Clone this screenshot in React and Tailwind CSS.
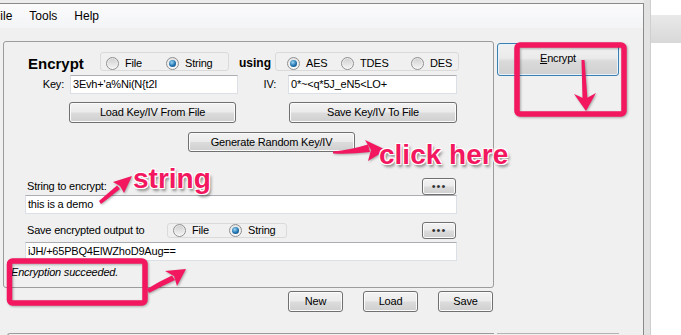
const btn =
  "flex items-center justify-center rounded-[3px] border border-[#707070] bg-[linear-gradient(180deg,#f3f3f3_0%,#ebebeb_48%,#dcdcdc_52%,#cfcfcf_100%)] shadow-[inset_0_0_0_1px_#fbfbfb] text-[11px] tracking-[-0.2px]";

const field =
  "flex items-center h-[19px] bg-white border border-[#dbdfe6] border-t-[#abadb3] pl-[2px] text-[11px] tracking-[-0.2px] whitespace-nowrap overflow-hidden";

const Radio = ({ label, checked, className = "" }) => (
  <span className={`flex items-center ${className}`}>
    <span className="flex items-center justify-center w-[13px] h-[13px] rounded-full border border-[#8e8f8f] bg-[linear-gradient(180deg,#e4e4e4,#fafafa)] shrink-0">
      {checked ? (
        <span className="w-[7px] h-[7px] rounded-full bg-[radial-gradient(circle_at_40%_35%,#9bd6f7,#1f72ad_55%,#0e4470)]" />
      ) : (
        <span className="w-[9px] h-[9px] rounded-full bg-[linear-gradient(180deg,#d2d2d2,#f2f2f2)]" />
      )}
    </span>
    <span className="ml-[6px] text-[11px] tracking-[-0.2px]">{label}</span>
  </span>
);

const Dots = () => (
  <div className={`${btn} w-[34px] h-[17px] text-[7px] tracking-[1px] pb-[1px] text-[#333]`}>•••</div>
);

const Label = ({ children, className = "" }) => (
  <span className={`text-[11px] tracking-[-0.2px] whitespace-nowrap ${className}`}>{children}</span>
);

const pink = "#f2175f";
const note =
  "absolute text-[28px] leading-[28px] font-bold text-[#f2175f] whitespace-nowrap [text-shadow:-1px_-1px_0_#fff,1px_-1px_0_#fff,-1px_1px_0_#fff,1px_1px_0_#fff,0_-1px_0_#fff,0_1px_0_#fff,2px_3px_3px_rgba(0,0,0,0.45)]";

const Annotations = () => (
  <>
    <svg
      className="absolute inset-0 pointer-events-none drop-shadow-[1px_1px_1px_rgba(0,0,0,0.3)]"
      width="681"
      height="335"
      viewBox="0 0 681 335"
    >
      <g fill="none" stroke={pink} strokeWidth="5.5" strokeLinejoin="round">
        <rect x="517" y="45" width="107" height="69" rx="3" />
        <rect x="9.5" y="261" width="135.5" height="42" rx="3" />
      </g>
      <g fill={pink}>
        {/* encrypt button arrow */}
        <polygon points="581.5,60 584.5,60 587.5,99 582.5,99" />
        <polygon points="574,94 585,99 596,93 586,111" />
        {/* click here arrow */}
        <path d="M333,151.5 Q350,150 368,144.5 L370,152 Q350,154.5 333,153.5 Z" />
        <path d="M365,140 L386,150 L368,161 L371,150 Z" />
        {/* status box arrow */}
        <path d="M147,289 L149,293 Q162,286 175,280 L172,275.5 Q158,282 147,289 Z" />
        <path d="M165,271 L186,269 L177,286 L174,276 Z" />
        {/* string arrow */}
        <path d="M99,201 L101,204 Q110,197 120,189 L117,185.5 Q107,194 99,201 Z" />
        <path d="M113,182 L132,176 L124,193 L120,186 Z" />
      </g>
    </svg>
    <span className={note} style={{ left: 379, top: 141 }}>click here</span>
    <span className={note} style={{ left: 133, top: 165 }}>string</span>
  </>
);

export default function App() {
  return (
    <div className="relative w-[681px] h-[335px] overflow-hidden bg-white flex text-black font-['Liberation_Sans',Arial,sans-serif]">
      {/* window */}
      <div className="w-[644px] h-full flex flex-col">
        <div className="h-[3px] bg-[#ececec] shrink-0" />
        <div className="flex-1 flex flex-col border-t border-r border-[#8a8a8a] overflow-hidden">
          {/* menu bar */}
          <div className="h-[24px] shrink-0 flex items-center gap-[17px] bg-[linear-gradient(180deg,#fbfbfc,#f3f4f6)] text-[12px]">
            <span className="ml-[-7px]">File</span>
            <span>Tools</span>
            <span>Help</span>
          </div>

          <div className="flex-1 bg-[#f0f0f0] pl-[3px] pt-[13px]">
            <div className="flex">
              {/* group box */}
              <div className="w-[491px] h-[247px] border border-[#9c9c9c] rounded-[3px] flex flex-col">
                {/* row 1 */}
                <div className="mt-[10px] h-[19px] flex items-start">
                  <span className="ml-[24px] w-[72px] mt-[2px] text-[15px] leading-[19px] font-bold">Encrypt</span>
                  <div className="w-[129px] h-[19px] border border-[#dadada] rounded-[3px] flex items-center pt-[4px] pl-[5px]">
                    <Radio label="File" className="w-[60px]" />
                    <Radio label="String" checked />
                  </div>
                  <span className="ml-[10px] w-[36px] mt-[2px] text-[12px] leading-[19px] font-bold">using</span>
                  <div className="w-[184px] h-[19px] border border-[#dadada] rounded-[3px] flex items-center pt-[4px] pl-[11px]">
                    <Radio label="AES" checked className="w-[54px]" />
                    <Radio label="TDES" className="w-[70px]" />
                    <Radio label="DES" />
                  </div>
                </div>

                {/* row 2 */}
                <div className="mt-[4px] h-[19px] flex items-center">
                  <Label className="w-[66px] text-right pr-[6px]">Key:</Label>
                  <div className={`${field} w-[168px]`}>3Evh+'a%Ni(N{"{"}t2I</div>
                  <Label className="w-[50px] text-right pr-[12px]">IV:</Label>
                  <div className={`${field} w-[169px]`}>0*~&lt;q*5J_eN5&lt;LO+</div>
                </div>

                {/* row 3 */}
                <div className="mt-[8px] flex">
                  <div className={`${btn} ml-[65px] w-[167px] h-[21px]`}>Load Key/IV From File</div>
                  <div className={`${btn} ml-[53px] w-[168px] h-[21px]`}>Save Key/IV To File</div>
                </div>

                {/* row 4 */}
                <div className="mt-[9px] flex">
                  <div className={`${btn} ml-[184px] w-[167px] h-[20px]`}>Generate Random Key/IV</div>
                </div>

                {/* row 5 */}
                <div className="mt-[26px] h-[17px] flex items-center">
                  <Label className="ml-[23px] w-[395px]">String to encrypt:</Label>
                  <Dots />
                </div>
                <div className="flex">
                  <div className={`${field} ml-[21px] w-[432px]`}>this is a demo</div>
                </div>

                {/* row 7 */}
                <div className="mt-[8px] h-[17px] flex items-center">
                  <Label className="ml-[23px] w-[140px]">Save encrypted output to</Label>
                  <div className="w-[120px] h-[15px] border border-[#dadada] rounded-[3px] flex items-center pl-[5px]">
                    <Radio label="File" className="w-[56px]" />
                    <Radio label="String" checked />
                  </div>
                  <div className="ml-[135px]">
                    <Dots />
                  </div>
                </div>
                <div className="mt-[3px] flex">
                  <div className={`${field} ml-[21px] w-[432px]`}>iJH/+65PBQ4ElWZhoD9Aug==</div>
                </div>

                <span className="mt-[5px] ml-[7px] text-[11px] leading-[13px] italic tracking-[-0.2px]">
                  Encryption succeeded.
                </span>
              </div>

              {/* right column */}
              <div className="ml-[3px] pt-[2px]">
                <div className="w-[122px] h-[33px] flex items-center justify-center rounded-[3px] border border-[#3c7fb1] bg-[linear-gradient(180deg,#f1f1f1_0%,#ebebeb_45%,#dadada_55%,#d0d0d0_100%)] shadow-[inset_0_0_0_1px_#e6f3fb] text-[11px] tracking-[-0.2px] pb-[2px]">
                  <span className="underline underline-offset-[1px]">E</span>ncrypt
                </div>
              </div>
            </div>

            {/* bottom buttons */}
            <div className="mt-[3px] w-[491px] pr-[1px] flex justify-end gap-[20px]">
              <div className={`${btn} w-[55px] h-[21px]`}>New</div>
              <div className={`${btn} w-[55px] h-[21px]`}>Load</div>
              <div className={`${btn} w-[55px] h-[21px]`}>Save</div>
            </div>

            <div className="mt-[21px] flex">
              <div className="ml-[4px] w-[487px] h-[4px] border-t border-l border-[#9c9c9c] rounded-tl-[3px]" />
              <div className="ml-[3px] w-[122px] h-[4px] border-t border-[#b4b4b4]" />
            </div>
          </div>
        </div>
      </div>

      {/* window frame */}
      <div className="w-[7px] h-full bg-[#e2e2e2] border-r border-[#cfcfcf]" />

      {/* window behind */}
      <div className="flex-1 flex flex-col">
        <div className="h-[15px] bg-white" />
        <div className="h-[28px] bg-[linear-gradient(180deg,#e9e9e9,#d8d8d8)]" />
        <div className="flex-1 bg-white" />
      </div>

      <Annotations />
    </div>
  );
}
